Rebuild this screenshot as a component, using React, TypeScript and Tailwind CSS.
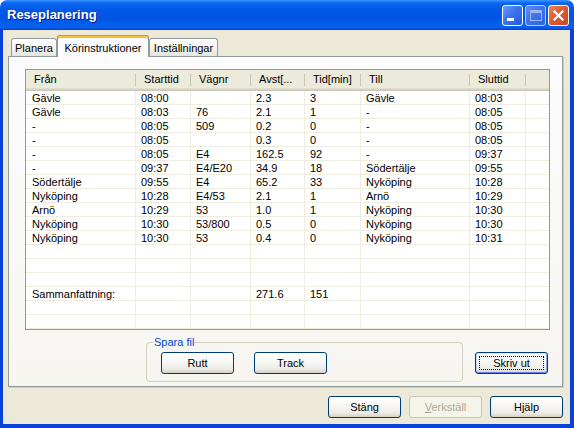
import React from "react";

const GRID = "grid grid-cols-[110px_55px_60px_54px_56px_109px_56px_1fr]";

const rows: string[][] = [
  ["Gävle", "08:00", "", "2.3", "3", "Gävle", "08:03"],
  ["Gävle", "08:03", "76", "2.1", "1", "-", "08:05"],
  ["-", "08:05", "509", "0.2", "0", "-", "08:05"],
  ["-", "08:05", "", "0.3", "0", "-", "08:05"],
  ["-", "08:05", "E4", "162.5", "92", "-", "09:37"],
  ["-", "09:37", "E4/E20", "34.9", "18", "Södertälje", "09:55"],
  ["Södertälje", "09:55", "E4", "65.2", "33", "Nyköping", "10:28"],
  ["Nyköping", "10:28", "E4/53", "2.1", "1", "Arnö", "10:29"],
  ["Arnö", "10:29", "53", "1.0", "1", "Nyköping", "10:30"],
  ["Nyköping", "10:30", "53/800", "0.5", "0", "Nyköping", "10:30"],
  ["Nyköping", "10:30", "53", "0.4", "0", "Nyköping", "10:31"],
  ["", "", "", "", "", "", ""],
  ["", "", "", "", "", "", ""],
  ["", "", "", "", "", "", ""],
  ["Sammanfattning:", "", "", "271.6", "151", "", ""],
  ["", "", "", "", "", "", ""],
  ["", "", "", "", "", "", ""],
];

const headers = ["Från", "Starttid", "Vägnr", "Avst[...", "Tid[min]", "Till", "Sluttid", ""];

function XpButton({
  children,
  disabled,
  focused,
  className = "",
}: {
  children: React.ReactNode;
  disabled?: boolean;
  focused?: boolean;
  className?: string;
}) {
  const base =
    "relative flex h-[22px] w-[73px] items-center justify-center rounded-[3px] border text-[11px] leading-none";
  const look = disabled
    ? "border-[#C9C7BA] bg-[#F5F4EA] text-[#ACA899]"
    : "border-[#003C74] bg-[linear-gradient(to_bottom,#FFFFFF_0%,#F7F7F4_45%,#ECEBE6_80%,#D6D0C5_100%)] text-black";
  const ring = focused
    ? "shadow-[inset_0_1px_0_#CEE7FF,inset_0_-1px_0_#6982EE,inset_1px_0_0_#BCD4F6,inset_-1px_0_0_#89ADE4]"
    : "";
  return (
    <button type="button" className={`${base} ${look} ${ring} ${className}`}>
      {focused && (
        <span className="absolute inset-[3px] border border-dotted border-black" />
      )}
      {children}
    </button>
  );
}

function TitleBar() {
  return (
    <div className="flex h-[30px] items-center rounded-t-[7px] bg-[linear-gradient(to_bottom,#3D95FF_0%,#0A66F0_10%,#0058E6_35%,#0054E3_60%,#0562EC_85%,#0A5AE8_93%,#003FD0_100%)] pl-[7px] pr-[5px]">
      <span className="flex-1 text-[13px] font-bold text-white [text-shadow:1px_1px_0_#0A1883]">
        Reseplanering
      </span>
      <div className="flex gap-[2px]">
        <div className="flex h-[21px] w-[21px] items-end rounded-[3px] border border-white bg-[linear-gradient(135deg,#6D9DFA_0%,#3A73F0_45%,#2358E6_100%)] pb-[4px] pl-[4px]">
          <div className="h-[3px] w-[7px] bg-white" />
        </div>
        <div className="flex h-[21px] w-[21px] items-center justify-center rounded-[3px] border border-[#B9CCF7] bg-[linear-gradient(135deg,#5B8CF5_0%,#3D72EC_50%,#2F62E3_100%)]">
          <div className="h-[11px] w-[12px] border border-t-[3px] border-[#9DB7F3]" />
        </div>
        <div className="flex h-[21px] w-[21px] items-center justify-center rounded-[3px] border border-white bg-[linear-gradient(135deg,#EE8562_0%,#DE5A30_45%,#C9461E_100%)]">
          <svg width="11" height="11" viewBox="0 0 11 11">
            <path d="M1.5 1.5 L9.5 9.5 M9.5 1.5 L1.5 9.5" stroke="white" strokeWidth="2.2" strokeLinecap="square" />
          </svg>
        </div>
      </div>
    </div>
  );
}

function Tabs() {
  const idle =
    "flex h-[18px] items-center justify-center rounded-t-[3px] border border-b-0 border-[#919B9C] bg-[linear-gradient(to_bottom,#FFFFFF,#F3F3EF_60%,#E5E4DC)] text-[11px]";
  return (
    <div className="flex h-[21px] items-end pl-[3px]">
      <div className={`${idle} w-[46px] pt-[1px]`}>Planera</div>
      <div className="relative z-10 -mb-[1px] flex h-[22px] w-[92px] items-start justify-center rounded-t-[3px] border-x border-[#919B9C] bg-[#FCFCFE] pt-[5px] text-[11px] shadow-[inset_0_2px_0_#FFC83C,inset_0_3px_0_#F5B54A] before:absolute before:left-0 before:right-0 before:top-0 before:h-px before:bg-[#E68B2C]">
        Körinstruktioner
      </div>
      <div className={`${idle} w-[69px] pt-[1px]`}>Inställningar</div>
    </div>
  );
}

function ListView() {
  return (
    <div className="h-[261px] w-[525px] overflow-hidden border border-[#7F9DB9] bg-white">
      <div className={`${GRID} h-[21px] bg-[#EBEADB] shadow-[inset_0_-1px_0_#CBC7B8,inset_0_-2px_0_#D6D2C2,inset_0_-3px_0_#E2DECD]`}>
        {headers.map((h, i) => (
          <div
            key={i}
            className={`relative flex items-center pb-[2px] pl-[8px] whitespace-nowrap ${
              i < 7
                ? "after:absolute after:right-0 after:top-[4px] after:h-[12px] after:w-px after:bg-[#C7C5B2]"
                : ""
            }`}
          >
            {h}
          </div>
        ))}
      </div>
      {rows.map((r, ri) => (
        <div key={ri} className={`${GRID} h-[14px]`}>
          {[...r, ""].map((c, ci) => (
            <div
              key={ci}
              className={`overflow-hidden whitespace-nowrap border-b border-r border-[#EFEDE0] leading-[14px] ${
                ci === 0 ? "pl-[6px]" : "pl-[5px]"
              } ${ci === 7 ? "border-r-0" : ""}`}
            >
              {c}
            </div>
          ))}
        </div>
      ))}
    </div>
  );
}

export default function App() {
  return (
    <div className="flex h-[428px] w-[574px] flex-col font-['Liberation_Sans',Arial,sans-serif] text-[11px] text-black">
      <TitleBar />
      <div className="flex flex-1 flex-col border-b-[4px] border-l-[3px] border-r-[4px] border-[#0842D6] bg-[#ECE9D8] pl-[5px] pr-[7px] pt-[5px]">
        <Tabs />
        <div className="flex h-[331px] flex-col border border-[#919B9C] bg-[linear-gradient(to_bottom,#FCFCFE,#F6F5F0)] pl-[16px] pr-[12px] pt-[12px] shadow-[1px_1px_0_#D0CEBF]">
          <ListView />
          <div className="mt-[6px] flex items-start">
            <fieldset className="ml-[121px] h-[46px] w-[317px] rounded-[4px] border border-[#D0D0BF] pl-0">
              <legend className="ml-[6px] px-[1px] leading-[13px] text-[#0046D5]">Spara fil</legend>
              <div className="ml-[14px] mt-[3px] flex gap-[20px]">
                <XpButton>Rutt</XpButton>
                <XpButton>Track</XpButton>
              </div>
            </fieldset>
            <XpButton focused className="ml-auto mr-[2px] mt-[16px]">
              Skriv ut
            </XpButton>
          </div>
        </div>
        <div className="mt-[9px] flex justify-end gap-[8px]">
          <XpButton>Stäng</XpButton>
          <XpButton disabled>
            <span>
              <span className="underline">V</span>erkställ
            </span>
          </XpButton>
          <XpButton>Hjälp</XpButton>
        </div>
      </div>
    </div>
  );
}
